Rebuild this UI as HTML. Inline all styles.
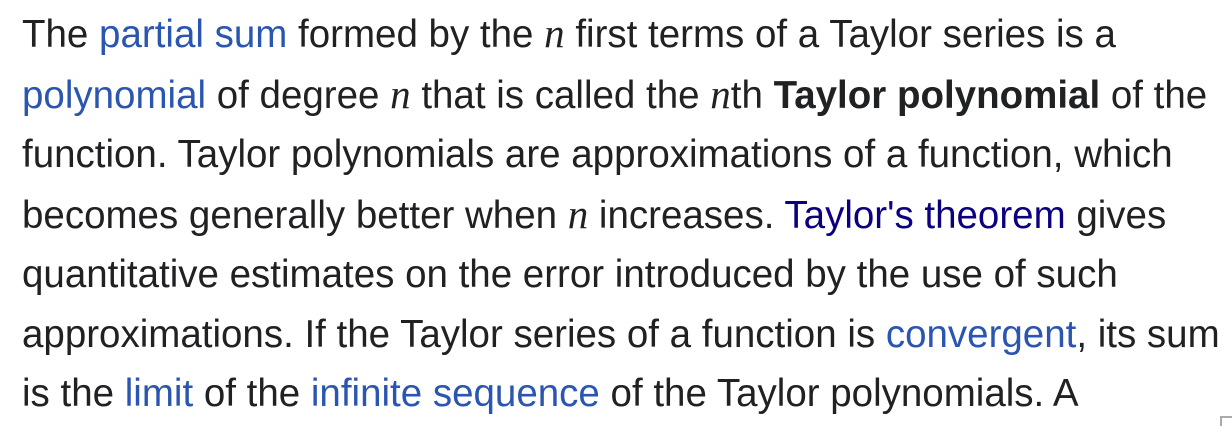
<!DOCTYPE html>
<html><head><style>
html,body{margin:0;padding:0;background:#fff;width:1232px;height:426px;overflow:hidden}
.p{position:absolute;left:22px;top:4px;font-family:"Liberation Sans",Arial,sans-serif;font-size:38.5px;color:#202122;line-height:59.5px;white-space:nowrap}
a{color:#2a55b0;text-decoration:none}
a.v{color:#0b0080}
i{font-family:"Liberation Serif",serif;font-size:41px}
.c{position:absolute;left:1220px;top:416px;width:12px;height:10px;border-left:2px solid #aaa;border-top:2px solid #aaa;box-sizing:border-box}
</style></head><body>
<div class="p">
The <a>partial sum</a> formed by the <i>n</i> first terms of a Taylor series is a<br>
<a>polynomial</a> of degree <i>n</i> that is called the <i>n</i>th <b>Taylor polynomial</b> of the<br>
function. Taylor polynomials are approximations of a function, which<br>
becomes generally better when <i>n</i> increases. <a class="v">Taylor's theorem</a> gives<br>
quantitative estimates on the error introduced by the use of such<br>
approximations. If the Taylor series of a function is <a>convergent</a>, its sum<br>
is the <a>limit</a> of the <a>infinite sequence</a> of the Taylor polynomials. A
</div>
<div class="c"></div>
</body></html>
